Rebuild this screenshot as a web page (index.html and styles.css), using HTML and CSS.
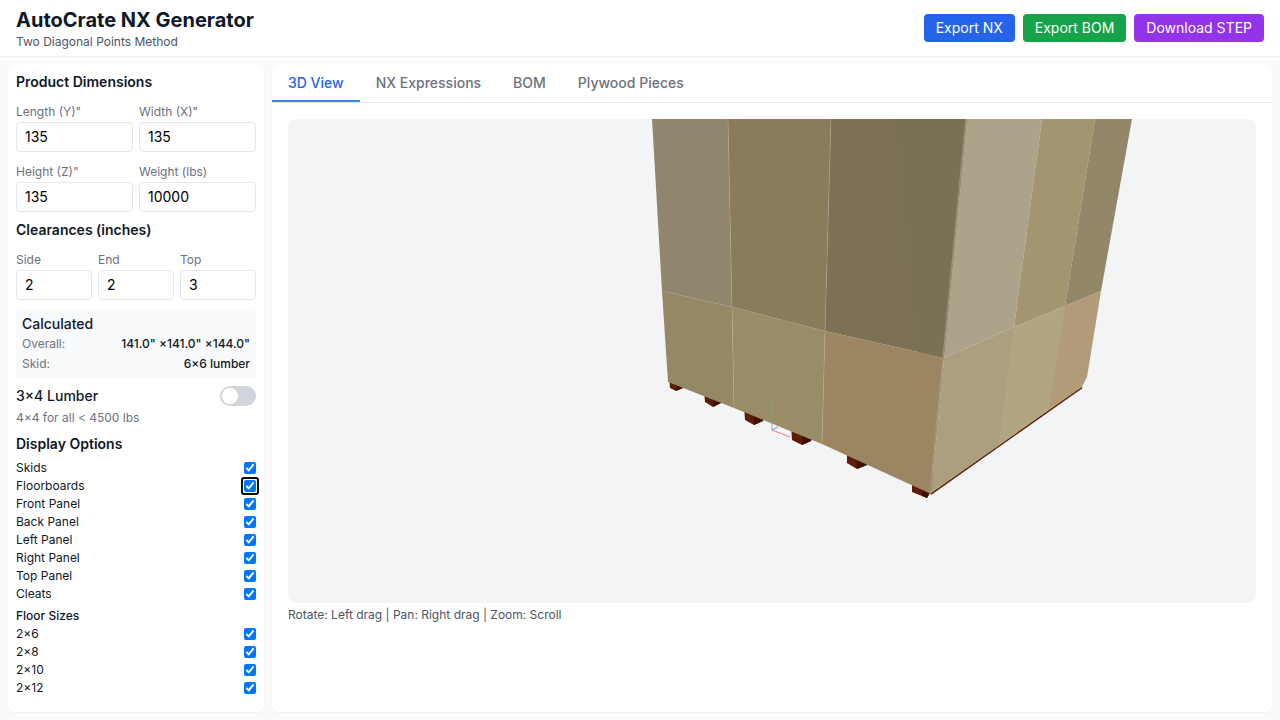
FILE: index.html
```html
<!DOCTYPE html>
<html lang="en">
<head>
    <meta charset="UTF-8">
    <meta name="viewport" content="width=device-width, initial-scale=1.0">
    <title>AutoCrate NX Generator</title>
    <link rel="stylesheet" href="styles.css">
</head>
<body>
    <header class="topbar">
        <div>
            <h1 class="app-title">AutoCrate NX Generator</h1>
            <p class="app-sub">Two Diagonal Points Method</p>
        </div>
        <div class="actions">
            <button class="btn btn-blue">Export NX</button>
            <button class="btn btn-green">Export BOM</button>
            <button class="btn btn-purple">Download STEP</button>
        </div>
    </header>

    <div class="layout">
        <aside class="card sidebar">
            <h2 class="section-title">Product Dimensions</h2>
            <div class="grid-two">
                <label class="field"><span>Length (Y)"</span><input type="text" value="135"></label>
                <label class="field"><span>Width (X)"</span><input type="text" value="135"></label>
                <label class="field"><span>Height (Z)"</span><input type="text" value="135"></label>
                <label class="field"><span>Weight (lbs)</span><input type="text" value="10000"></label>
            </div>

            <h2 class="section-title clearances">Clearances (inches)</h2>
            <div class="grid-three">
                <label class="field"><span>Side</span><input type="text" value="2"></label>
                <label class="field"><span>End</span><input type="text" value="2"></label>
                <label class="field"><span>Top</span><input type="text" value="3"></label>
            </div>

            <div class="calc">
                <h3 class="calc-title">Calculated</h3>
                <div class="calc-row"><span class="calc-key">Overall:</span><span class="calc-val">141.0" ×141.0" ×144.0"</span></div>
                <div class="calc-row"><span class="calc-key">Skid:</span><span class="calc-val">6×6 lumber</span></div>
            </div>

            <div class="toggle-row">
                <span class="toggle-label">3×4 Lumber</span>
                <span class="toggle"><span class="knob"></span></span>
            </div>
            <p class="hint-small">4×4 for all &lt; 4500 lbs</p>

            <h2 class="section-title display">Display Options</h2>
            <div class="checks">
                <label class="check"><span>Skids</span><input type="checkbox" checked></label>
                <label class="check"><span>Floorboards</span><input type="checkbox" class="focused" checked></label>
                <label class="check"><span>Front Panel</span><input type="checkbox" checked></label>
                <label class="check"><span>Back Panel</span><input type="checkbox" checked></label>
                <label class="check"><span>Left Panel</span><input type="checkbox" checked></label>
                <label class="check"><span>Right Panel</span><input type="checkbox" checked></label>
                <label class="check"><span>Top Panel</span><input type="checkbox" checked></label>
                <label class="check"><span>Cleats</span><input type="checkbox" checked></label>
            </div>
            <h3 class="sub-title">Floor Sizes</h3>
            <div class="checks">
                <label class="check"><span>2×6</span><input type="checkbox" checked></label>
                <label class="check"><span>2×8</span><input type="checkbox" checked></label>
                <label class="check"><span>2×10</span><input type="checkbox" checked></label>
                <label class="check"><span>2×12</span><input type="checkbox" checked></label>
            </div>
        </aside>

        <main class="card main">
            <nav class="tabs">
                <button class="tab active">3D View</button>
                <button class="tab">NX Expressions</button>
                <button class="tab">BOM</button>
                <button class="tab">Plywood Pieces</button>
            </nav>
            <div class="panel">
                <div class="viewport">
                    <svg class="scene" viewBox="288 119 968 484" width="968" height="484">
                        <!-- skids sit under the panels -->
                        <polygon class="skid" points="669,376 689,376 683,388 676,391 670,388"/>
                        <polygon class="skid" points="704,390 725,390 721,403 713,407 705,402"/>
                        <polygon class="skid" points="744,406 767,406 763,421 754,425 745,420"/>
                        <polygon class="skid" points="791,426 815,426 811,441 802,445 792,440"/>
                        <polygon class="skid" points="847,449 871,449 867,465 857,469 847,463"/>
                        <polygon class="skid" points="912,476 936,476 931,491 927,498 912,492"/>
                        <polygon class="skid-dark" points="676,380 689,380 683,388 676,391"/>
                        <polygon class="skid-dark" points="713,395 725,395 721,403 713,407"/>
                        <polygon class="skid-dark" points="754,410 767,410 763,421 754,425"/>
                        <polygon class="skid-dark" points="802,430 815,430 811,441 802,445"/>
                        <polygon class="skid-dark" points="857,453 871,453 867,465 857,469"/>
                        <polygon class="skid-dark" points="922,480 936,480 931,491 927,498 922,496"/>
                        <line class="base-edge" x1="931" y1="494" x2="1082" y2="387.5"/>
                        <!-- upper panels -->
                        <polygon class="f-a" points="652,119 728,119 732,307 662,291"/>
                        <polygon class="f-b" points="728,119 831,119 825,331 732,307"/>
                        <polygon class="f-c" points="831,119 967,119 944,358 825,331"/>
                        <polygon class="f-c2" points="895,119 967,119 944,358 917,352"/>
                        <polygon class="f-d" points="967,119 1042,119 1014,327 944,358"/>
                        <polygon class="f-e" points="1042,119 1095,119 1065,306 1014,327"/>
                        <polygon class="f-f" points="1095,119 1132,119 1101,291 1065,306"/>
                        <!-- lower panels -->
                        <polygon class="f-g" points="662,291 732,307 734,408 668,382"/>
                        <polygon class="f-h" points="732,307 825,331 822,444 734,408"/>
                        <polygon class="f-i" points="825,331 944,358 931,494 822,444"/>
                        <polygon class="f-j" points="944,358 1014,327 999,445 931,493"/>
                        <polygon class="f-k" points="1014,327 1065,306 1049,410 999,445"/>
                        <polygon class="f-l" points="1065,306 1101,291 1087,377 1082,387 1049,410"/>
                        <!-- seams -->
                        <polyline class="seam" points="728,119 732,307 734,408"/>
                        <polyline class="seam" points="831,119 825,331 822,444"/>
                        <polyline class="seam-corner" points="966,119 943,358 930,493"/>
                        <polyline class="seam-dark" points="1014,327 999,445"/>
                        <polyline class="seam-dark" points="1065,306 1049,410"/>
                        <!-- axes -->
                        <line class="axis-y" x1="772" y1="430" x2="772" y2="401"/>
                        <line class="axis-x" x1="772" y1="430" x2="790" y2="437"/>
                        <line class="axis-z" x1="772" y1="430" x2="778" y2="427"/>
                    </svg>
                </div>
                <p class="help">Rotate: Left drag | Pan: Right drag | Zoom: Scroll</p>
            </div>
        </main>
    </div>
</body>
</html>
```

FILE: styles.css
```css
* {
    box-sizing: border-box;
}
html, body {
    height: 100%;
}
body {
    margin: 0;
    display: flex;
    flex-direction: column;
    overflow: hidden;
    background: #f9fafb;
    color: #111827;
    font-family: Inter, "Liberation Sans", sans-serif;
}
h1, h2, h3, p {
    margin: 0;
}

/* header */
.topbar {
    flex: none;
    height: 56px;
    padding: 6px 16px;
    display: flex;
    justify-content: space-between;
    align-items: center;
    background: #fff;
    box-shadow: 0 1px 2px rgba(0, 0, 0, 0.05);
}
.app-title {
    font-size: 20px;
    line-height: 28px;
    font-weight: 700;
}
.app-sub {
    font-size: 12px;
    line-height: 16px;
    color: #4b5563;
}
.actions {
    display: flex;
    gap: 8px;
}
.btn {
    height: 28px;
    padding: 0 12px 1px;
    border: 0;
    border-radius: 4px;
    color: #fff;
    font-family: inherit;
    font-size: 14px;
}
.btn-blue { background: #2563eb; }
.btn-green { background: #16a34a; }
.btn-purple { background: #9333ea; }

/* columns */
.layout {
    flex: 1;
    min-height: 0;
    padding: 8px;
    display: flex;
    gap: 8px;
}
.card {
    background: #fff;
    border-radius: 8px;
    box-shadow: 0 1px 2px rgba(0, 0, 0, 0.05);
}
.sidebar {
    flex: none;
    width: 256px;
    padding: 8px;
}
.main {
    flex: 1;
    min-width: 0;
}

/* sidebar */
.section-title {
    font-size: 14px;
    line-height: 20px;
    font-weight: 600;
}
.clearances {
    margin-top: 8px;
}
.display {
    margin-top: 8px;
}
.grid-two {
    margin-top: 12px;
    display: grid;
    grid-template-columns: 1fr 1fr;
    gap: 12px 6px;
}
.grid-three {
    margin-top: 12px;
    display: grid;
    grid-template-columns: 1fr 1fr 1fr;
    gap: 6px;
}
.field {
    display: block;
    min-width: 0;
}
.field span {
    display: block;
    margin-bottom: 2px;
    font-size: 12px;
    line-height: 16px;
    color: #6b7280;
}
.field input {
    display: block;
    width: 100%;
    height: 30px;
    padding: 0 8px 1px;
    border: 1px solid #e5e7eb;
    border-radius: 4px;
    background: #fff;
    color: #000;
    font-family: inherit;
    font-size: 14px;
}
.calc {
    margin-top: 8px;
    height: 70px;
    padding: 6px;
    background: #f9fafb;
    border-radius: 4px;
}
.calc-title {
    font-size: 14px;
    line-height: 20px;
    font-weight: 500;
}
.calc-row {
    display: flex;
    justify-content: space-between;
    height: 20px;
    font-size: 12px;
    line-height: 20px;
}
.calc-key {
    color: #6b7280;
}
.calc-val {
    font-weight: 500;
}
.toggle-row {
    margin-top: 8px;
    display: flex;
    justify-content: space-between;
    align-items: center;
}
.toggle-label {
    padding-bottom: 1px;
    font-size: 14px;
    font-weight: 500;
}
.toggle {
    width: 36px;
    height: 20px;
    padding: 2px;
    display: block;
    border-radius: 10px;
    background: #d1d5db;
}
.knob {
    display: block;
    width: 16px;
    height: 16px;
    border-radius: 50%;
    background: #fff;
}
.hint-small {
    margin-top: 4px;
    font-size: 12px;
    line-height: 16px;
    color: #6b7280;
}
.checks {
    margin-top: 6px;
    display: flex;
    flex-direction: column;
    gap: 2px;
}
.check {
    display: flex;
    justify-content: space-between;
    align-items: center;
    height: 16px;
    font-size: 12px;
    line-height: 16px;
}
.check input {
    width: 12px;
    height: 12px;
    margin: 0;
}
.focused {
    outline: -webkit-focus-ring-color auto 1px;
    outline-offset: 2px;
}
.sub-title {
    margin-top: 6px;
    font-size: 12px;
    line-height: 16px;
    font-weight: 500;
}
.sub-title + .checks {
    margin-top: 2px;
}

/* tabs */
.tabs {
    height: 39px;
    display: flex;
    border-bottom: 1px solid #e5e7eb;
}
.tab {
    padding: 0 16px 2px;
    border: 0;
    background: none;
    color: #6b7280;
    font-family: inherit;
    font-size: 14px;
    font-weight: 500;
}
.tab.active {
    padding-bottom: 0;
    color: #2563eb;
    border-bottom: 2px solid #3b82f6;
}
.panel {
    padding: 16px;
}
.viewport {
    height: 484px;
    background: #f3f4f6;
    border-radius: 8px;
    overflow: hidden;
}
.scene {
    display: block;
}
.help {
    margin-top: 4px;
    font-size: 12px;
    line-height: 16px;
    color: #4b5563;
}

/* crate faces */
.f-a { fill: #90866e; }
.f-b { fill: #8a7b5a; }
.f-c { fill: #7d7155; }
.f-c2 { fill: #7a7053; }
.f-d { fill: #ada38a; }
.f-e { fill: #a2956f; }
.f-f { fill: #938769; }
.f-g { fill: #958865; }
.f-h { fill: #9b8c68; }
.f-i { fill: #9c8661; }
.f-j { fill: #ac9f80; }
.f-k { fill: #b2a581; }
.f-l { fill: #b19b79; }
.seam {
    fill: none;
    stroke: #c4baa0;
    stroke-width: 0.8;
    opacity: 0.4;
}
.seam-corner {
    fill: none;
    stroke: #a39a80;
    stroke-width: 1.5;
    opacity: 0.8;
}
.seam-dark {
    fill: none;
    stroke: #9c8f70;
    stroke-width: 0.8;
    opacity: 0.5;
}
.base-edge {
    stroke: #5f2108;
    stroke-width: 1.6;
}
.skid { fill: #5c1c05; }
.skid-dark { fill: #3f1000; }
.axis-x, .axis-y, .axis-z {
    stroke-width: 0.8;
}
.axis-x { stroke: #f0565a; }
.axis-y { stroke: #6fae6f; }
.axis-z { stroke: #5b6ee0; }
```
